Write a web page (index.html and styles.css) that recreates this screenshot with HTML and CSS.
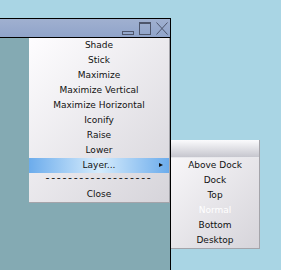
FILE: index.html
```html
<!DOCTYPE html>
<html lang="en">
  <head>
    <meta charset="UTF-8" />
    <title>Window menu</title>
    <link rel="stylesheet" href="styles.css">
  </head>
  <body>
    <div class="desktop">
      <div class="window">
        <div class="titlebar">
          <svg class="btn" width="12" height="13" viewBox="0 0 12 13">
            <rect x="0.5" y="9.5" width="11" height="3" fill="none" stroke="#4e566c" />
          </svg>
          <svg class="btn" width="12" height="13" viewBox="0 0 12 13">
            <rect x="0.5" y="0.5" width="11" height="12" fill="none" stroke="#4e566c" />
            <line x1="0" y1="1.5" x2="12" y2="1.5" stroke="#4e566c" />
          </svg>
          <svg class="btn" width="12" height="13" viewBox="0 0 12 13">
            <path d="M0.5 0.5 L11.5 12.5 M11.5 0.5 L0.5 12.5" stroke="#4e566c" fill="none" />
          </svg>
        </div>
        <div class="content"></div>
      </div>

      <div class="menu">
        <div class="item">Shade</div>
        <div class="item">Stick</div>
        <div class="item">Maximize</div>
        <div class="item">Maximize Vertical</div>
        <div class="item">Maximize Horizontal</div>
        <div class="item">Iconify</div>
        <div class="item">Raise</div>
        <div class="item">Lower</div>
        <div class="item active">Layer...<span class="arrow"></span></div>
        <div class="item sep"><span class="dashes">-------------------</span></div>
        <div class="item">Close</div>
      </div>

      <div class="submenu">
        <div class="subtitle"></div>
        <div class="item">Above Dock</div>
        <div class="item">Dock</div>
        <div class="item">Top</div>
        <div class="item current">Normal</div>
        <div class="item">Bottom</div>
        <div class="item">Desktop</div>
      </div>
    </div>
  </body>
</html>
```

FILE: styles.css
```css
* {
  padding: 0;
  margin: 0;
  box-sizing: border-box;
}
body {
  background: #a9d5e4;
  font-family: "DejaVu Sans", sans-serif;
  font-size: 9px;
  color: #111;
  overflow: hidden;
}
.desktop {
  position: relative;
  width: 281px;
  height: 270px;
  overflow: hidden;
}
.window {
  position: absolute;
  left: -10px;
  top: 18px;
  width: 181px;
  height: 260px;
  border: 1px solid #000;
  display: flex;
  flex-direction: column;
}
.titlebar {
  height: 19px;
  border-bottom: 1px solid #000;
  background: linear-gradient(#a0b0d0, #90a4ca);
  display: flex;
  justify-content: flex-end;
  align-items: flex-start;
  gap: 5px;
  padding: 3px 2px 0 0;
}
.btn {
  display: block;
}
.content {
  flex: 1;
  background: #84aab3;
}
.menu {
  position: absolute;
  left: 29px;
  top: 38px;
  width: 141px;
  background: linear-gradient(135deg, #fefdff, #d6d4da);
  border-right: 1px solid #a4a4aa;
  border-bottom: 1px solid #a4a4aa;
}
.item {
  position: relative;
  height: 15px;
  line-height: 15px;
  text-align: center;
  white-space: nowrap;
}
.active {
  background: linear-gradient(to right, #6cacec, #d6ecfc 50%, #6cacec);
}
.arrow {
  position: absolute;
  left: 130px;
  top: 5px;
  border-left: 4px solid #111;
  border-top: 2.5px solid transparent;
  border-bottom: 2.5px solid transparent;
}
.sep {
  height: 14px;
  line-height: 9px;
}
.dashes {
  font-size: 11px;
  letter-spacing: 1.65px;
}
.submenu {
  position: absolute;
  left: 171px;
  top: 140px;
  width: 89px;
  background: linear-gradient(135deg, #fbfafc, #d6d4da);
  border-right: 1px solid #a4a4aa;
  border-bottom: 1px solid #a4a4aa;
}
.subtitle {
  height: 18px;
  background: linear-gradient(#fbfbfd, #c6c6ce);
  border-bottom: 1px solid #e8e8ec;
}
.current {
  color: #fff;
}
```
